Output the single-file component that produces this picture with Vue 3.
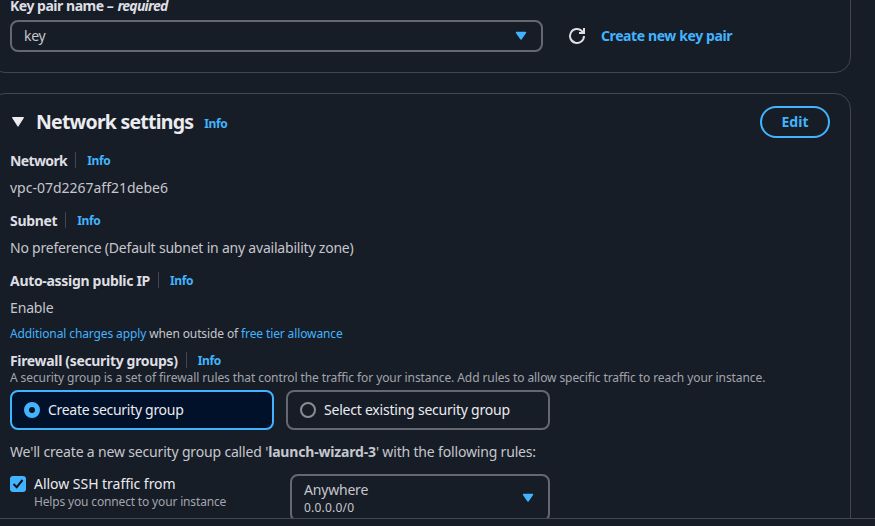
<script setup>
const fields = [
  { label: 'Network', value: 'vpc-07d2267aff21debe6', cls: 'f-network' },
  { label: 'Subnet', value: 'No preference (Default subnet in any availability zone)', cls: 'f-subnet' },
  { label: 'Auto-assign public IP', value: 'Enable', cls: 'f-ip' },
]
</script>

<template>
  <div class="page">
    <main class="content">
      <section class="card card-key">
        <div class="label key-label"><span class="t-key">Key pair name – </span><i class="t-req">required</i></div>
        <div class="key-row">
          <div class="select key-select">
            <span class="t-keyval">key</span>
            <svg class="caret" width="12" height="10" viewBox="0 0 12 10"><path d="M1.5 1.5h9L6 8z" fill="#42b4ff" stroke="#42b4ff" stroke-width="1.4" stroke-linejoin="round" /></svg>
          </div>
          <svg class="refresh" width="18" height="18" viewBox="0 0 18 18" fill="none" stroke="#dedee3" stroke-width="2">
            <path d="M16 9a7 7 0 1 1-2.2-5.1L16 6" />
            <path d="M16 1v5h-5" />
          </svg>
          <a class="link-bold t-create">Create new key pair</a>
        </div>
      </section>

      <section class="card card-net">
        <header class="head">
          <svg class="toggle" width="14" height="12" viewBox="0 0 14 12"><path d="M1.7 1.7h10.6L7 10z" fill="#ebebf0" stroke="#ebebf0" stroke-width="1.2" stroke-linejoin="round" /></svg>
          <h2><span class="t-title">Network settings</span></h2>
          <a class="info head-info">Info</a>
          <button class="edit">Edit</button>
        </header>

        <div v-for="f in fields" :key="f.label" class="field" :class="f.cls">
          <div class="label-row"><span class="label name">{{ f.label }}</span><a class="info">Info</a></div>
          <div class="value"><span class="val">{{ f.value }}</span></div>
        </div>

        <div class="charges"><span class="t-charges"><a>Additional charges apply</a> when outside of <a>free tier allowance</a></span></div>

        <div class="label-row fw-row f-fw"><span class="label name">Firewall (security groups)</span><a class="info">Info</a></div>
        <div class="desc"><span class="t-desc">A security group is a set of firewall rules that control the traffic for your instance. Add rules to allow specific traffic to reach your instance.</span></div>

        <div class="tiles">
          <div class="tile selected"><span class="radio on"></span><span class="t-tile1">Create security group</span></div>
          <div class="tile"><span class="radio"></span><span class="t-tile2">Select existing security group</span></div>
        </div>

        <p class="sentence"><span class="t-sent">We'll create a new security group called '<b>launch-wizard-3</b>' with the following rules:</span></p>

        <div class="rule">
          <span class="check">
            <svg width="16" height="16" viewBox="0 0 16 16" fill="none" stroke="#0f141a" stroke-width="2"><path d="M3.5 8l3.2 3.2L12.5 4" /></svg>
          </span>
          <div class="rule-text">
            <div class="rule-name"><span class="t-allow">Allow SSH traffic from</span></div>
            <div class="rule-help"><span class="t-help">Helps you connect to your instance</span></div>
          </div>
          <div class="select source">
            <div>
              <div class="src-name"><span class="t-any">Anywhere</span></div>
              <div class="src-cidr"><span class="t-cidr">0.0.0.0/0</span></div>
            </div>
            <svg class="caret" width="12" height="10" viewBox="0 0 12 10"><path d="M1.5 1.5h9L6 8z" fill="#42b4ff" stroke="#42b4ff" stroke-width="1.4" stroke-linejoin="round" /></svg>
          </div>
        </div>
      </section>
    </main>
    <footer class="bar"></footer>
  </div>
</template>

<style>
body { background: #161d26; }
</style>

<style scoped>
* { box-sizing: border-box; }
.page {
  width: 875px; height: 526px; overflow: hidden; background: #161d26; color: #c6c6cd;
  font: 14px/20px "Noto Sans", "Open Sans", sans-serif; letter-spacing: -0.35px;
  display: flex; flex-direction: column; white-space: nowrap;
}
.content { height: 518px; flex: none; overflow: hidden; }
.bar { flex: 1; border-top: 1px solid #424650; background: #161d26; }
.card { width: 862px; margin-left: -11px; border: 1px solid #424650; border-radius: 16px; padding: 0 20px; }
.card-key { height: 93px; margin-top: -20px; padding-top: 15px; }
.card-net { height: 600px; margin-top: 20px; padding-top: 12px; }
.label { font-weight: 700; color: #dedee3; letter-spacing: -0.5px; }
.key-label { height: 24px; line-height: 20px; }
.key-row { display: flex; align-items: center; height: 32px; }
.select { border: 2px solid #656871; border-radius: 8px; display: flex; align-items: center; justify-content: space-between; }
.key-select { width: 533px; height: 32px; padding: 0 14px 0 12px; }
.refresh { margin-left: 25px; }
a { color: #42b4ff; }
.link-bold { font-weight: 700; margin-left: 15px; }
.head { display: flex; align-items: center; height: 32px; }
.toggle { margin-left: 1px; }
h2 { margin: -1px 0 0 11px; font-size: 19.5px; line-height: 24px; color: #ebebf0; font-weight: 700; }
.info { font-size: 12px; font-weight: 700; letter-spacing: -0.35px; }
.head-info { margin: 4px 0 0 11px; }
.edit {
  margin-left: auto; width: 70px; height: 32px; border: 2px solid #42b4ff; border-radius: 16px; background: none;
  color: #42b4ff; font: 700 14px/20px "Noto Sans", sans-serif; padding: 0;
}
.field { height: 60px; }
.head + .field { margin-top: 12px; }
.label-row { display: flex; align-items: center; height: 20px; }
.label-row .name { padding-right: 8px; border-right: 1px solid #424650; height: 16px; line-height: 17px; }
.label-row .info { margin: 2px 0 0 11px; }
.value { padding-top: 8px; }
.charges { font-size: 12px; line-height: 16px; margin-top: -4px; }
.fw-row { margin-top: 8px; }
.desc { font-size: 12px; line-height: 16px; color: #a4a4ad; }
.tiles { display: flex; gap: 12px; margin-top: 4px; }
.tile { width: 264px; height: 40px; border: 2px solid #656871; border-radius: 8px; display: flex; align-items: center; padding-left: 12px; gap: 8px; color: #ebebf0; }
.selected { border-color: #42b4ff; background: #001129; }
.radio { width: 16px; height: 16px; border: 2px solid #8c8c94; border-radius: 50%; }
.radio.on { border: 5px solid #42b4ff; background: #0f141a; }
.sentence { margin: 12px 0 0; }
.rule { display: flex; margin-top: 12px; }
.check { width: 16px; height: 16px; margin-top: 2px; border-radius: 3px; background: #42b4ff; display: flex; }
.rule-text { width: 256px; margin-left: 8px; }
.rule-name { color: #ebebf0; }
.rule-help { font-size: 12px; line-height: 16px; color: #a4a4ad; }
.source { width: 260px; height: 48px; padding: 0 14px 0 12px; }
.src-cidr { font-size: 12px; line-height: 16px; }

/* Per-text tracking */
.t-key { letter-spacing: -0.48px; }
.t-req { letter-spacing: -0.75px; margin-left: 1px; }
.t-create { letter-spacing: -0.4px; }
.t-title { letter-spacing: -0.78px; }
.f-network .name { letter-spacing: -0.62px; }
.f-subnet .name { letter-spacing: -0.33px; }
.f-ip .name { letter-spacing: -0.31px; }
.f-fw .name { letter-spacing: -0.33px; }
.f-network .val { letter-spacing: -0.01px; }
.f-subnet .val { letter-spacing: -0.21px; }
.f-ip .val { letter-spacing: -0.15px; }
.t-charges { letter-spacing: -0.12px; }
.t-desc { letter-spacing: -0.09px; }
.t-tile1 { letter-spacing: -0.3px; }
.t-tile2 { letter-spacing: -0.22px; }
.t-sent { letter-spacing: -0.17px; }
.t-allow { letter-spacing: -0.03px; }
.t-help { letter-spacing: -0.16px; }
.t-any { letter-spacing: -0.2px; }
.t-cidr { letter-spacing: 0.2px; }
</style>
